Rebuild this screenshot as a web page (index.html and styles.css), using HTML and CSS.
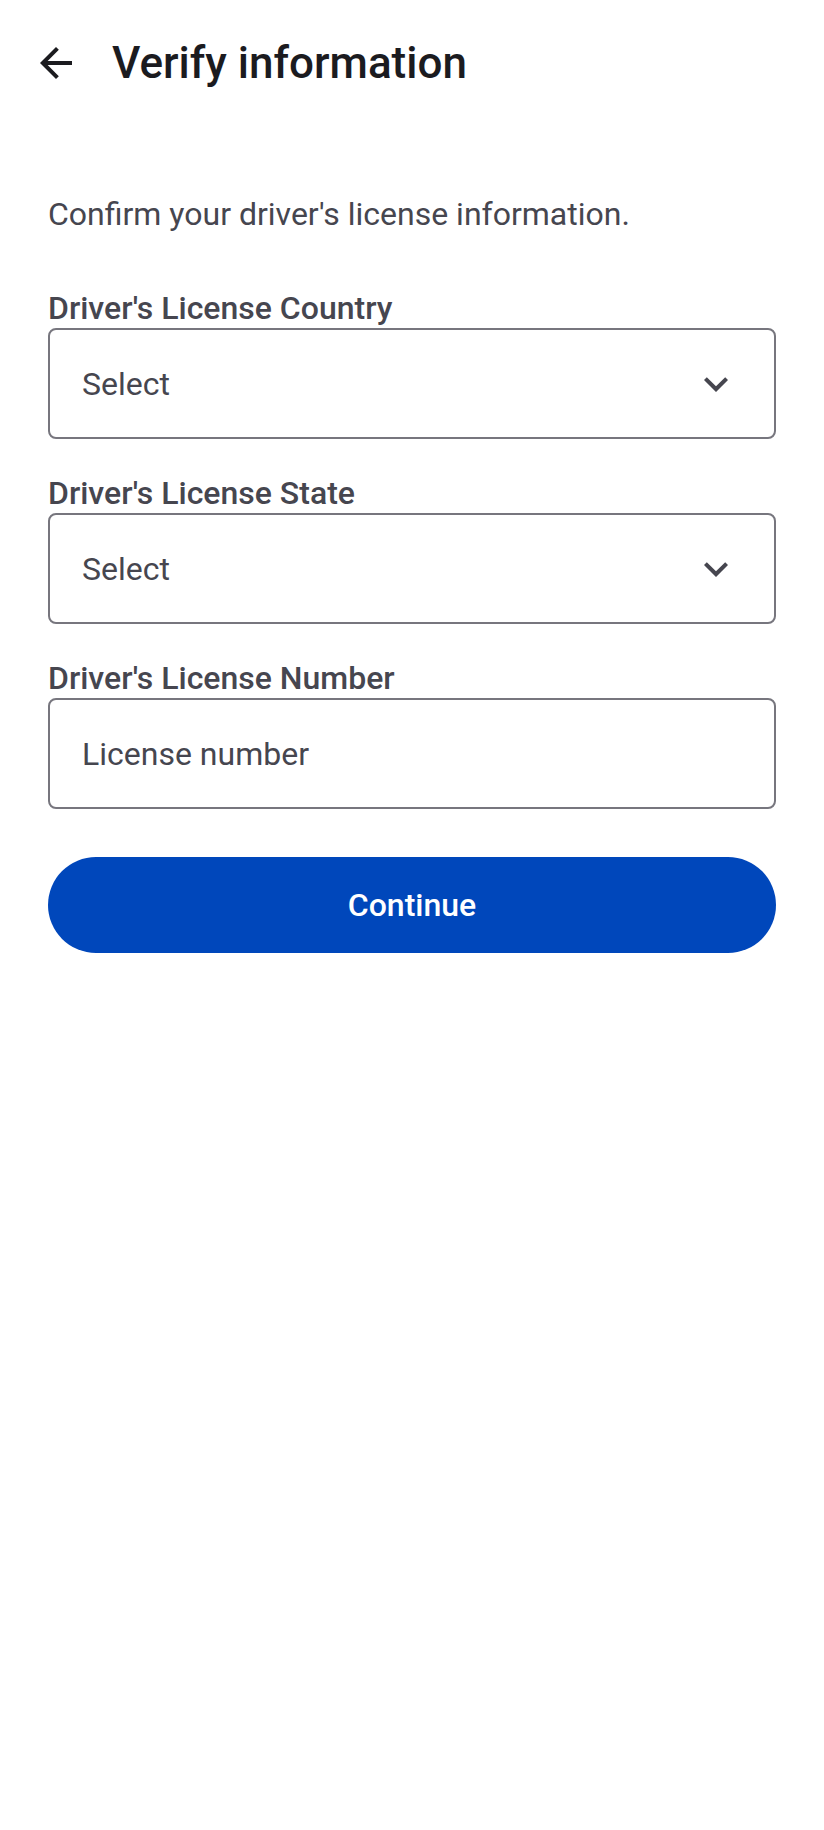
FILE: index.html
```html
<!DOCTYPE html>
<html lang="en">
<head>
<meta charset="utf-8">
<title>Verify information</title>
<link rel="stylesheet" href="styles.css">
</head>
<body>
<header class="toolbar">
  <button class="back" aria-label="Back">
    <svg viewBox="0 0 24 24" width="48" height="48"><path d="M20 11H7.83l5.59-5.59L12 4l-8 8 8 8 1.41-1.41L7.83 13H20v-2z" fill="currentColor"/></svg>
  </button>
  <h1 class="title">Verify information</h1>
</header>
<main class="content">
  <p class="intro">Confirm your driver's license information.</p>
  <div class="field">
    <label class="label">Driver's License Country</label>
    <div class="box select">
      <span class="value">Select</span>
      <svg class="chevron" viewBox="0 0 24 24" width="48" height="48"><path d="M16.59 8.59L12 13.17 7.41 8.59 6 10l6 6 6-6z" fill="currentColor"/></svg>
    </div>
  </div>
  <div class="field">
    <label class="label">Driver's License State</label>
    <div class="box select">
      <span class="value">Select</span>
      <svg class="chevron" viewBox="0 0 24 24" width="48" height="48"><path d="M16.59 8.59L12 13.17 7.41 8.59 6 10l6 6 6-6z" fill="currentColor"/></svg>
    </div>
  </div>
  <div class="field">
    <label class="label">Driver's License Number</label>
    <div class="box">
      <span class="value">License number</span>
    </div>
  </div>
  <button class="continue">Continue</button>
</main>
</body>
</html>
```
FILE: styles.css
```css
html, body {
  margin: 0;
  padding: 0;
  background: #ffffff;
}
body {
  font-family: Roboto, "Noto Sans", sans-serif;
  color: #1b1b1f;
}
.toolbar {
  height: 126px;
  display: flex;
  align-items: center;
  padding-left: 32px;
}
.back {
  width: 48px;
  height: 48px;
  padding: 0;
  border: 0;
  background: none;
  color: #1b1b1f;
  display: flex;
}
.title {
  margin: 0 0 0 32px;
  font-size: 44px;
  font-weight: 500;
  line-height: 52px;
  color: #1b1b1f;
}
.content {
  padding: 66px 48px 0;
}
.intro {
  margin: 0;
  font-size: 32px;
  line-height: 44px;
  color: #46464f;
}
.field {
  margin-top: 36px;
}
.field:first-of-type {
  margin-top: 54px;
}
.label {
  display: block;
  font-size: 32px;
  line-height: 36px;
  font-weight: 500;
  color: #46464f;
  margin-bottom: 2px;
}
.box {
  height: 111px;
  box-sizing: border-box;
  border: 2px solid #77767e;
  border-radius: 8px;
  display: flex;
  align-items: center;
  padding: 0 34px 0 32px;
}
.value {
  flex: 1;
  font-size: 32px;
  line-height: 44px;
  color: #46464f;
}
.chevron {
  color: #46464f;
  flex: none;
}
.continue {
  display: block;
  width: 100%;
  height: 96px;
  margin-top: 48px;
  border: 0;
  border-radius: 48px;
  background: #0047bb;
  color: #ffffff;
  font-family: Roboto, "Noto Sans", sans-serif;
  font-size: 32px;
  font-weight: 500;
}
```
